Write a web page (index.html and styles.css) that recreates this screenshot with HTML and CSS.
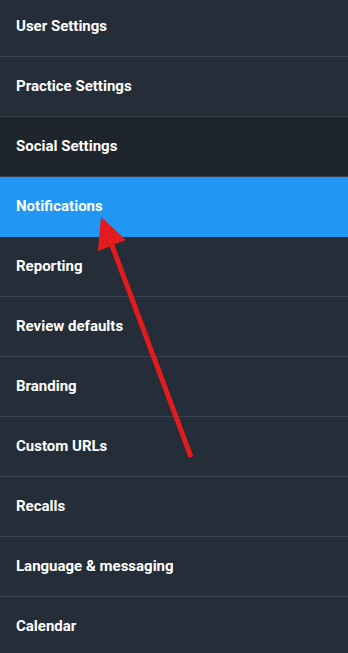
FILE: index.html
```html
<!DOCTYPE html>
<html>
<head>
<meta charset="utf-8">
<link rel="stylesheet" href="styles.css">
</head>
<body>
<nav class="menu">
  <a class="item">User Settings</a>
  <a class="item">Practice Settings</a>
  <a class="item item-dark">Social Settings</a>
  <a class="item item-active">Notifications</a>
  <a class="item">Reporting</a>
  <a class="item">Review defaults</a>
  <a class="item">Branding</a>
  <a class="item">Custom URLs</a>
  <a class="item">Recalls</a>
  <a class="item">Language &amp; messaging</a>
  <a class="item">Calendar</a>
</nav>
<svg class="arrow" width="348" height="653" viewBox="0 0 348 653">
  <line x1="191" y1="457" x2="110" y2="240" stroke="#e31b1f" stroke-width="5"/>
  <polygon points="101,217 126,240 98,251" fill="#e31b1f"/>
</svg>
</body>
</html>
```
FILE: styles.css
```css
html, body {
  margin: 0;
  padding: 0;
  background: #252e38;
  width: 348px;
  height: 653px;
  overflow: hidden;
}
.menu {
  display: flex;
  flex-direction: column;
  margin-top: -3px;
}
.item {
  display: flex;
  align-items: center;
  box-sizing: border-box;
  height: 60px;
  border-bottom: 1px solid #3a434d;
  padding: 0 16px 2px;
  font-family: Roboto, "Liberation Sans", sans-serif;
  font-weight: 700;
  font-size: 15px;
  letter-spacing: 0;
  color: #ffffff;
  background: #252e38;
}
.item-dark {
  background: #1f252d;
}
.item-active {
  background: #2196f3;
  border-bottom-color: #2196f3;
}
.arrow {
  position: absolute;
  left: 0;
  top: 0;
}
```
